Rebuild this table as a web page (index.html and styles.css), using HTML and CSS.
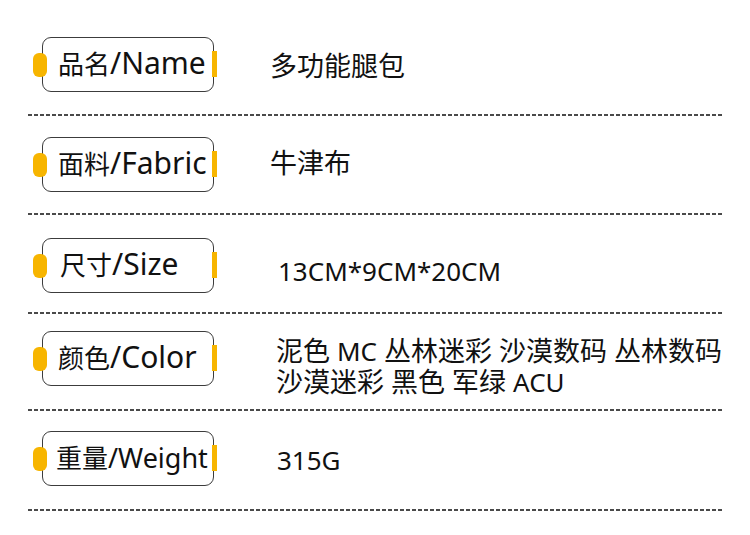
FILE: index.html
```html
<!DOCTYPE html>
<html lang="zh">
<head>
<meta charset="utf-8">
<title>参数</title>
<link rel="stylesheet" href="styles.css">
</head>
<body>
<div class="sheet">
  <div class="row row-1">
    <div class="tag"><span class="pin-l"></span><span class="tag-text">品名<span class="lat">/Name</span></span><span class="pin-r"></span></div>
    <div class="val val-cjk">多功能腿包</div>
  </div>
  <div class="sep"></div>
  <div class="row row-2">
    <div class="tag"><span class="pin-l"></span><span class="tag-text">面料<span class="lat">/Fabric</span></span><span class="pin-r"></span></div>
    <div class="val val-cjk">牛津布</div>
  </div>
  <div class="sep"></div>
  <div class="row row-3">
    <div class="tag tag-size"><span class="pin-l"></span><span class="tag-text">尺寸<span class="lat">/Size</span></span><span class="pin-r"></span></div>
    <div class="val val-size">13CM*9CM*20CM</div>
  </div>
  <div class="sep"></div>
  <div class="row row-4">
    <div class="tag"><span class="pin-l"></span><span class="tag-text">颜色<span class="lat">/Color</span></span><span class="pin-r"></span></div>
    <div class="val val-cjk val-color">
      <div class="line">泥色 <span class="v-lat">MC</span> 丛林迷彩 沙漠数码 丛林数码</div>
      <div class="line">沙漠迷彩 黑色 军绿 <span class="v-lat">ACU</span></div>
    </div>
  </div>
  <div class="sep"></div>
  <div class="row row-5">
    <div class="tag tag-weight"><span class="pin-l"></span><span class="tag-text">重量<span class="lat lat-sm">/Weight</span></span><span class="pin-r"></span></div>
    <div class="val val-weight">315G</div>
  </div>
  <div class="sep"></div>
</div>
</body>
</html>
```

FILE: styles.css
```css
html, body {
  margin: 0;
  padding: 0;
  background: #ffffff;
}

body {
  font-family: "Noto Sans", "Noto Sans CJK SC", sans-serif;
  color: #111111;
  width: 750px;
  height: 535px;
  overflow: hidden;
}

.sheet {
  display: flex;
  flex-direction: column;
}

.row {
  display: flex;
  align-items: flex-start;
  padding-left: 42px;
  box-sizing: border-box;
}

.row-1 { height: 114px; }
.row-2 { height: 97px; }
.row-3 { height: 97px; }
.row-4 { height: 95px; }
.row-5 { height: 98px; }

.row-1 .tag { margin-top: 37px; }
.row-2 .tag { margin-top: 21px; }
.row-3 .tag { margin-top: 23px; }
.row-4 .tag { margin-top: 17px; }
.row-5 .tag { margin-top: 20px; }

.tag {
  position: relative;
  box-sizing: border-box;
  width: 172px;
  height: 55px;
  border: 1px solid #3c3c3c;
  border-radius: 9px;
  display: flex;
  align-items: center;
  padding-left: 15px;
  flex-shrink: 0;
}

.tag-size { padding-left: 17px; }
.tag-weight { padding-left: 13px; }

.tag-text {
  font-size: 26px;
  line-height: 30px;
  color: #111;
  white-space: nowrap;
  position: relative;
  top: -1px;
}

.lat {
  font-size: 30px;
}

.lat-sm {
  font-size: 27px;
}

.pin-l {
  position: absolute;
  left: -10px;
  top: 15px;
  width: 14px;
  height: 24px;
  border-radius: 6px;
  background: #f7b500;
}

.pin-r {
  position: absolute;
  right: -4px;
  top: 13px;
  width: 5px;
  height: 26px;
  background: #f7b500;
}

.val {
  margin-left: 56px;
  font-size: 26px;
  line-height: 31px;
  color: #111;
  white-space: nowrap;
}

.val-cjk {
  font-size: 27px;
}

.v-lat {
  font-size: 26px;
}

.row-1 .val { margin-top: 50px; }
.row-2 .val { margin-top: 31px; }

.val-size {
  margin-left: 64px;
  margin-top: 41px;
}

.val-color {
  margin-left: 62px;
  margin-top: 21px;
}

.line {
  height: 31px;
}

.val-weight {
  margin-left: 63px;
  margin-top: 34px;
}

.sep {
  margin-left: 28px;
  width: 696px;
  height: 2px;
  flex-shrink: 0;
  background: repeating-linear-gradient(90deg, #4a4a4a 0 4px, transparent 4px 6px);
}
```
